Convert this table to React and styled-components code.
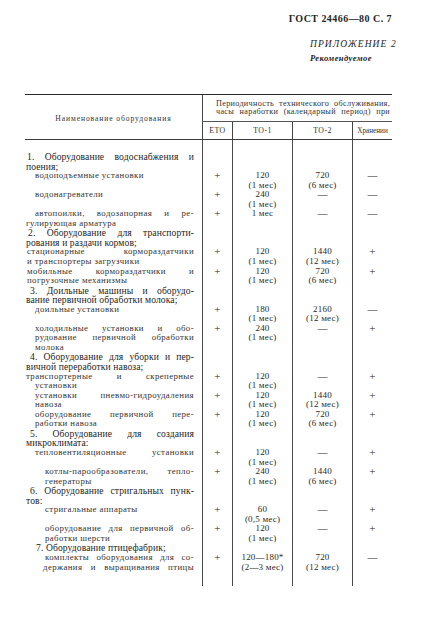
import React from "react";
import styled, { createGlobalStyle } from "styled-components";

const GlobalStyle = createGlobalStyle`
  html, body {
    margin: 0;
    padding: 0;
    background: #ffffff;
  }
  body {
    font-family: "Liberation Serif", "DejaVu Serif", serif;
    color: #262626;
  }
`;

const COLS = "177px 30px 60px 60px 40px";
const LH = 9.55;

const Page = styled.div`
  width: 367px;
  padding: 13px 0 0 25px;
`;

const Head = styled.div`
  display: flex;
  flex-direction: column;
  align-items: flex-end;
`;

const DocNo = styled.div`
  font-size: 10px;
  font-weight: bold;
  letter-spacing: 0.45px;
  line-height: 12px;
`;

const Annex = styled.div`
  margin-top: 13px;
  width: 82px;
  font-style: italic;
`;

const AnnexTitle = styled.div`
  font-size: 9.5px;
  letter-spacing: 1.1px;
  line-height: 12px;
  white-space: nowrap;
`;

const AnnexNote = styled.div`
  margin-top: 3px;
  font-size: 8.6px;
  font-weight: bold;
  letter-spacing: 0.4px;
  line-height: 10px;
  white-space: nowrap;
`;

const HeaderGrid = styled.div`
  margin-top: 31px;
  display: grid;
  grid-template-columns: ${COLS};
  grid-template-rows: 27px 17px;
  border-top: 1.5px solid #2a2a2a;
  border-bottom: 1px solid #3a3a3a;
  font-size: 7.6px;
  color: #333;
`;

const NameHead = styled.div`
  grid-row: 1 / 3;
  display: flex;
  align-items: center;
  justify-content: center;
  letter-spacing: 0.9px;
  padding-top: 3px;
`;

const PeriodHead = styled.div`
  grid-column: 2 / 6;
  border-left: 1px solid #444;
  border-bottom: 1px solid #555;
  padding: 5px 2px 0 13px;
  line-height: 7.5px;
  font-size: 8.2px;
`;

const PeriodLine = styled.div`
  white-space: nowrap;
  text-align: justify;
  text-align-last: justify;
  letter-spacing: 0.3px;
`;

const SubHead = styled.div`
  border-left: 1px solid #444;
  display: flex;
  align-items: center;
  justify-content: center;
  letter-spacing: ${(p) => (p.$tight ? "0" : "0.4px")};
  font-size: ${(p) => (p.$tight ? "7.2px" : "7.8px")};
  white-space: nowrap;
  overflow: hidden;
`;

const Row = styled.div`
  display: grid;
  grid-template-columns: ${COLS};
  height: ${(p) => (p.$height ? `${p.$height}px` : "auto")};
`;

const NameCell = styled.div`
  padding-right: 8px;
  font-size: 9px;
  line-height: ${LH}px;
`;

const Line = styled.div`
  padding-left: ${(p) => p.$indent}px;
  white-space: nowrap;
  text-align: ${(p) => (p.$justify ? "justify" : "left")};
  text-align-last: ${(p) => (p.$justify ? "justify" : "left")};
  letter-spacing: ${(p) => (p.$heading ? "0.1px" : "0.4px")};
  font-size: ${(p) => (p.$heading ? "9.6px" : "8.8px")};
  color: ${(p) => (p.$heading ? "#1e1e1e" : "#333")};
`;

const ValueCell = styled.div`
  border-left: 1px solid #4a4a4a;
  text-align: center;
  font-size: 9px;
  line-height: ${LH}px;
  color: #2a2a2a;
  white-space: nowrap;
  letter-spacing: 0.2px;
`;

const Mark = styled.span`
  font-size: ${(p) => (p.$dash ? "10px" : "11px")};
  line-height: ${LH}px;
`;

const rows = [
  { lines: [["1. Оборудование водоснабжения и", 2, 1], ["поения;", 1]], heading: true },
  { lines: [["водоподъемные установки", 10]], v: ["+", ["120", "(1 мес)"], ["720", "(6 мес)"], "—"] },
  { lines: [["водонагреватели", 10]], v: ["+", ["240", "(1 мес)"], ["—"], "—"] },
  { lines: [["автопоилки, водозапорная и ре-", 10, 1], ["гулирующая арматура", 1]], v: ["+", ["1 мес"], ["—"], "—"] },
  { lines: [["2. Оборудование для транспорти-", 3, 1], ["рования и раздачи кормов;", 1]], heading: true },
  { lines: [["стационарные кормораздатчики", 2, 1], ["и транспортеры загрузчики", 2]], v: ["+", ["120", "(1 мес)"], ["1440", "(12 мес)"], "+"] },
  { lines: [["мобильные кормораздатчики и", 2, 1], ["погрузочные механизмы", 2]], v: ["+", ["120", "(1 мес)"], ["720", "(6 мес)"], "+"] },
  { lines: [["3. Доильные машины и оборудо-", 5, 1], ["вание первичной обработки молока;", 1]], heading: true },
  { lines: [["доильные установки", 10]], v: ["+", ["180", "(1 мес)"], ["2160", "(12 мес)"], "—"] },
  {
    lines: [["холодильные установки и обо-", 10, 1], ["рудование первичной обработки", 10, 1], ["молока", 10]],
    v: ["+", ["240", "(1 мес)"], ["—"], "+"],
  },
  { lines: [["4. Оборудование для уборки и пер-", 5, 1], ["вичной переработки навоза;", 1]], heading: true },
  { lines: [["транспортерные и скреперные", 1, 1], ["установки", 10]], v: ["+", ["120", "(1 мес)"], ["—"], "+"] },
  { lines: [["установки пневмо-гидроудаления", 10, 1], ["навоза", 10]], v: ["+", ["120", "(1 мес)"], ["1440", "(12 мес)"], "+"] },
  { lines: [["оборудование первичной пере-", 10, 1], ["работки навоза", 10]], v: ["+", ["120", "(1 мес)"], ["720", "(6 мес)"], "+"] },
  { lines: [["5. Оборудование для создания", 5, 1], ["микроклимата:", 1]], heading: true },
  { lines: [["тепловентиляционные установки", 10, 1]], v: ["+", ["120", "(1 мес)"], ["—"], "+"] },
  { lines: [["котлы-парообразователи, тепло-", 20, 1], ["генераторы", 20]], v: ["+", ["240", "(1 мес)"], ["1440", "(6 мес)"], "+"] },
  { lines: [["6. Оборудование стригальных пунк-", 5, 1], ["тов:", 1]], heading: true },
  { lines: [["стригальные аппараты", 20]], v: ["+", ["60", "(0,5 мес)"], ["—"], "+"] },
  { lines: [["оборудование для первичной об-", 20, 1], ["работки шерсти", 20]], v: ["+", ["120", "(1 мес)"], ["—"], "+"] },
  { lines: [["7. Оборудование птицефабрик;", 11]], heading: true },
  {
    lines: [["комплекты оборудования для со-", 20, 1], ["держания и выращивания птицы", 18, 1]],
    v: ["+", ["120—180*", "(2—3 мес)"], ["720", "(12 мес)"], "—"],
  },
];

function Values({ v }) {
  if (!v) {
    return (
      <>
        <ValueCell />
        <ValueCell />
        <ValueCell />
        <ValueCell />
      </>
    );
  }
  const [eto, to1, to2, store] = v;
  return (
    <>
      <ValueCell>
        <Mark>{eto}</Mark>
      </ValueCell>
      <ValueCell>
        {to1.map((t, i) => (
          <div key={i}>{t === "—" ? <Mark $dash>—</Mark> : t}</div>
        ))}
      </ValueCell>
      <ValueCell>
        {to2.map((t, i) => (
          <div key={i}>{t === "—" ? <Mark $dash>—</Mark> : t}</div>
        ))}
      </ValueCell>
      <ValueCell>
        <Mark $dash={store === "—"}>{store}</Mark>
      </ValueCell>
    </>
  );
}

export default function App() {
  return (
    <>
      <GlobalStyle />
      <Page>
        <Head>
          <DocNo>ГОСТ 24466—80 С. 7</DocNo>
          <Annex>
            <AnnexTitle>ПРИЛОЖЕНИЕ 2</AnnexTitle>
            <AnnexNote>Рекомендуемое</AnnexNote>
          </Annex>
        </Head>

        <HeaderGrid>
          <NameHead>Наименование оборудования</NameHead>
          <PeriodHead>
            <PeriodLine>Периодичность технического обслуживания,</PeriodLine>
            <PeriodLine>часы наработки (календарный период) при</PeriodLine>
          </PeriodHead>
          <SubHead>ЕТО</SubHead>
          <SubHead>ТО-1</SubHead>
          <SubHead>ТО-2</SubHead>
          <SubHead $tight>Хранении</SubHead>
        </HeaderGrid>

        <Row $height={12}>
          <NameCell />
          <Values />
        </Row>
        {rows.map((r, i) => (
          <Row key={i}>
            <NameCell>
              {r.lines.map(([text, indent, justify], j) => (
                <Line key={j} $indent={indent} $justify={!!justify} $heading={r.heading}>
                  {text}
                </Line>
              ))}
            </NameCell>
            <Values v={r.v} />
          </Row>
        ))}
        <Row $height={14}>
          <NameCell />
          <Values />
        </Row>
      </Page>
    </>
  );
}
